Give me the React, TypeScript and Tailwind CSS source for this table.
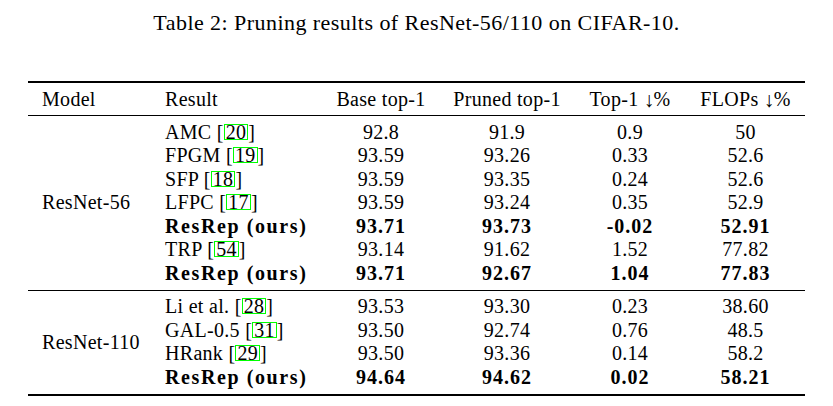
type Row = {
  name: string
  cite?: string
  base: string
  pruned: string
  top1: string
  flops: string
  bold?: boolean
}

const resnet56: Row[] = [
  { name: 'AMC', cite: '20', base: '92.8', pruned: '91.9', top1: '0.9', flops: '50' },
  { name: 'FPGM', cite: '19', base: '93.59', pruned: '93.26', top1: '0.33', flops: '52.6' },
  { name: 'SFP', cite: '18', base: '93.59', pruned: '93.35', top1: '0.24', flops: '52.6' },
  { name: 'LFPC', cite: '17', base: '93.59', pruned: '93.24', top1: '0.35', flops: '52.9' },
  { name: 'ResRep (ours)', base: '93.71', pruned: '93.73', top1: '-0.02', flops: '52.91', bold: true },
  { name: 'TRP', cite: '54', base: '93.14', pruned: '91.62', top1: '1.52', flops: '77.82' },
  { name: 'ResRep (ours)', base: '93.71', pruned: '92.67', top1: '1.04', flops: '77.83', bold: true },
]

const resnet110: Row[] = [
  { name: 'Li et al.', cite: '28', base: '93.53', pruned: '93.30', top1: '0.23', flops: '38.60' },
  { name: 'GAL-0.5', cite: '31', base: '93.50', pruned: '92.74', top1: '0.76', flops: '48.5' },
  { name: 'HRank', cite: '29', base: '93.50', pruned: '93.36', top1: '0.14', flops: '58.2' },
  { name: 'ResRep (ours)', base: '94.64', pruned: '94.62', top1: '0.02', flops: '58.21', bold: true },
]

const cols = 'grid grid-cols-[124px_170px_118px_134px_112px_119px]'
const serif = "font-['Liberation_Serif','Times_New_Roman',serif]"

function Cite({ n }: { n: string }) {
  return (
    <>
      {' '}[<span className="inline-block border border-[#00ff00] leading-[14px] h-[16px] px-[1px] align-[-3px]">{n}</span>]
    </>
  )
}

function Down() {
  return <span className="inline-block text-[21px] leading-none align-[-1px] -mr-[1px]">↓</span>
}

function Section({ model, rows }: { model: string; rows: Row[] }) {
  return (
    <div className={`${cols} auto-rows-[23.5px] pt-[4px] pb-[5px]`}>
      <div
        className="col-start-1 row-start-1 flex items-center pl-[14px]"
        style={{ gridRow: `1 / span ${rows.length}` }}
      >
        {model}
      </div>
      {rows.map((r, i) => {
        const b = r.bold ? 'font-bold tracking-[1.6px]' : ''
        const n = r.bold ? 'font-bold tracking-[1px]' : ''
        return (
          <div key={i} className="contents">
            <div className={`col-start-2 flex items-center pl-[13px] whitespace-nowrap ${b}`} style={{ gridRow: i + 1 }}>
              {r.name}
              {r.cite && <Cite n={r.cite} />}
            </div>
            <div className={`col-start-3 flex items-center justify-center ${n}`} style={{ gridRow: i + 1 }}>{r.base}</div>
            <div className={`col-start-4 flex items-center justify-center ${n}`} style={{ gridRow: i + 1 }}>{r.pruned}</div>
            <div className={`col-start-5 flex items-center justify-center ${n}`} style={{ gridRow: i + 1 }}>{r.top1}</div>
            <div className={`col-start-6 flex items-center justify-center ${n}`} style={{ gridRow: i + 1 }}>{r.flops}</div>
          </div>
        )
      })}
    </div>
  )
}

export default function App() {
  return (
    <div className={`w-[833px] h-[406px] bg-white text-black ${serif} text-[20px] tracking-[0.3px]`}>
      <div className={`pt-[9px] text-center ${serif} text-[22px] leading-[28px] tracking-[0.45px]`}>
        Table 2: Pruning results of ResNet-56/110 on CIFAR-10.
      </div>

      <div className="ml-[28px] mt-[44px] w-[777px]">
        <div className="h-[2px] bg-black" />
        {/* Header */}
        <div className={`${cols} h-[32px] items-center`}>
          <div className="pl-[14px]">Model</div>
          <div className="pl-[13px]">Result</div>
          <div className="text-center">Base top-1</div>
          <div className="text-center">Pruned top-1</div>
          <div className="text-center">
            Top-1 <Down />%
          </div>
          <div className="text-center">
            FLOPs <Down />%
          </div>
        </div>
        <div className="h-[1px] bg-black" />

        <Section model="ResNet-56" rows={resnet56} />
        <div className="h-[1px] bg-black" />
        <Section model="ResNet-110" rows={resnet110} />
        <div className="h-[2px] bg-black" />
      </div>
    </div>
  )
}
